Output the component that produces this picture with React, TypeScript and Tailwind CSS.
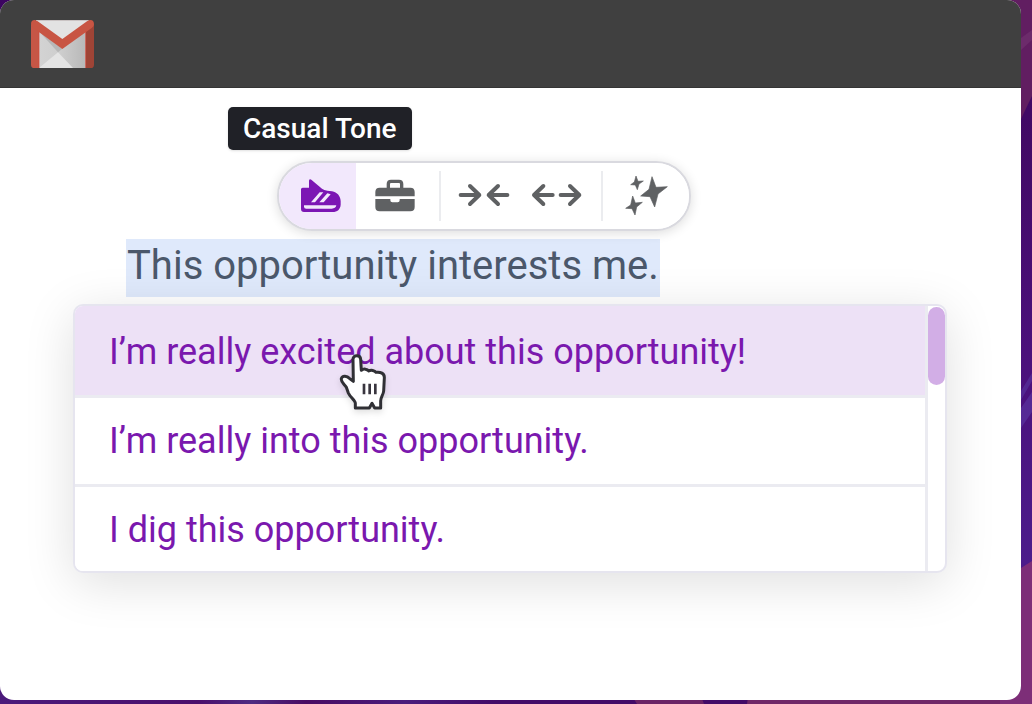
import { useState } from "react";
import type { ReactNode } from "react";

function Backdrop() {
  return (
    <svg
      className="absolute inset-0 h-full w-full"
      viewBox="0 0 1032 704"
      preserveAspectRatio="none"
      aria-hidden="true"
    >
      <defs>
        <linearGradient id="side" x1="0" y1="0" x2="0" y2="1">
          <stop offset="0" stopColor="#3c0561" />
          <stop offset="0.2" stopColor="#420a66" />
          <stop offset="0.5" stopColor="#4b107b" />
          <stop offset="0.8" stopColor="#4b1c8b" />
          <stop offset="1" stopColor="#451069" />
        </linearGradient>
        <linearGradient id="base" x1="0" y1="0" x2="1" y2="0">
          <stop offset="0" stopColor="#4b1a7b" />
          <stop offset="0.22" stopColor="#4b0f6c" />
          <stop offset="0.28" stopColor="#4e2c82" />
          <stop offset="0.34" stopColor="#490b63" />
          <stop offset="0.45" stopColor="#4a1c7c" />
          <stop offset="0.55" stopColor="#430b68" />
          <stop offset="1" stopColor="#430b68" />
        </linearGradient>
      </defs>
      <rect width="1032" height="704" fill="url(#side)" />
      <rect y="670" width="900" height="34" fill="url(#base)" />
      <path d="M1000 0H1032V96L1021 119H1000Z" fill="#611e61" />
      <path d="M1021 38L1032 30V40L1021 50Z" fill="#6c2b6b" />
      <path d="M1021 391L1032 373V381L1021 400Z" fill="#57309b" fillOpacity=".7" />
      <path d="M1021 408L1032 392V412L1021 428Z" fill="#57309b" fillOpacity=".8" />
      <path d="M749 690H1021V704H747Z" fill="#702868" />
      <path d="M1021 568L1032 561V704H1000V690H1021Z" fill="#7d2e78" />
      <path d="M632 696H701L704 704H637Z" fill="#6b2466" />
    </svg>
  );
}

function MailLogo() {
  return (
    <svg width="63" height="48" viewBox="93 60 189 144" role="img" aria-label="Gmail">
      <defs>
        <linearGradient id="paper" x1="0" y1="0" x2="1" y2="0">
          <stop offset="0" stopColor="#d3d3d3" />
          <stop offset=".45" stopColor="#cecece" />
          <stop offset="1" stopColor="#b8b8b8" />
        </linearGradient>
      </defs>
      <rect x="108" y="60" width="158" height="144" fill="#e3e3e3" />
      <path d="M117 94L187 146L257 94V204H117Z" fill="url(#paper)" />
      <path d="M117 94L174 157L187 146Z" fill="#b7b7b7" />
      <path d="M174 157L219 204H117Z" fill="#e4e4e4" />
      <path d="M93 72L117 90V204H103Q93 204 93 194Z" fill="#c65646" />
      <path d="M257 90L282 72V194Q282 204 272 204H257Z" fill="#9f4436" />
      <path
        d="M93 72Q93 60 104 60Q108 60 112 63L187 117L262 63Q266 60 271 60Q282 60 282 73Q282 79 275 84L187 147L101 85Q93 79 93 72Z"
        fill="#c85543"
      />
      <path d="M117 94V204M257 94V204" stroke="#d44638" strokeWidth="2" />
      <path d="M109 61H265" stroke="#b7aaaa" strokeWidth="2" />
    </svg>
  );
}

function ShoeIcon() {
  return (
    <svg width="42" height="35" viewBox="92 80 126 105" aria-hidden="true">
      <path
        d="M95 114Q95 109 100 109H119V88Q120 82 126 85L158 112Q164 117 174 118L188 120C204 123 213 134 214 149V160C213 174 204 182 190 182H104Q95 182 95 173Z"
        fill="#7c16b4"
      />
      <path d="M125 153L151 123H162L137 153ZM150 153L174 126L184 129L163 153Z" fill="#f2e8fc" />
      <path d="M104 162H201Q199 172 187 172H111Q104 172 104 166Z" fill="#f2e8fc" />
    </svg>
  );
}

function BriefcaseIcon() {
  return (
    <svg width="40" height="33" viewBox="314 85 120 99" aria-hidden="true">
      <path
        d="M354 116V100Q354 92 362 92H386Q394 92 394 100V116"
        fill="none"
        stroke="#5f6163"
        strokeWidth="10"
      />
      <path
        d="M328 111H420Q433 111 433 124V137H315V124Q315 111 328 111ZM315 145H360V149Q360 155 366 155H382Q388 155 388 149V145H433V169Q433 182 420 182H328Q315 182 315 169Z"
        fill="#5f6163"
      />
    </svg>
  );
}

function ShortenIcon() {
  return (
    <svg width="52" height="24" viewBox="54 100 156 72" aria-hidden="true">
      <path
        d="M62 136H118M90 109L118 136L90 163M202 136H146M174 109L146 136L174 163"
        fill="none"
        stroke="#5f6163"
        strokeWidth="12"
        strokeLinecap="round"
        strokeLinejoin="round"
      />
    </svg>
  );
}

function LengthenIcon() {
  return (
    <svg width="52" height="24" viewBox="273 100 156 72" aria-hidden="true">
      <path
        d="M338 136H282M310 109L282 136L310 163M362 136H418M390 109L418 136L390 163"
        fill="none"
        stroke="#5f6163"
        strokeWidth="12"
        strokeLinecap="round"
        strokeLinejoin="round"
      />
    </svg>
  );
}

function SparklesIcon() {
  return (
    <svg width="43" height="41" viewBox="554 74 129 123" aria-hidden="true">
      <g fill="#5f6163" stroke="#5f6163" strokeWidth="2" strokeLinejoin="round">
        <path d="M635 79L647 111L681 109L653 131L643 170L629 139L601 137L626 117Z" />
        <path d="M587 77L593 93L609 92L596 101L591 118L585 104L571 103L582 95Z" />
        <path d="M577 137L585 158L606 156L589 170L584 194L575 175L556 174L571 164Z" />
      </g>
    </svg>
  );
}

function HandCursor() {
  return (
    <svg
      className="pointer-events-none absolute top-[46px] left-[263px] drop-shadow-md"
      width="50"
      height="60"
      viewBox="24 20 150 180"
      aria-hidden="true"
    >
      <path
        d="M69 42C69 28 91 27 92 42L94 75C101 69 112 71 116 77C123 73 134 75 138 81C151 79 164 84 163 98L161 137C160 149 151 157 152 168L152 188H134L126 174L118 188H76V174C76 166 60 155 55 143L49 126C44 117 32 110 34 100C37 89 52 92 58 99L70 108Z"
        fill="#fff"
        stroke="#303035"
        strokeWidth="9"
        strokeLinejoin="round"
      />
      <path d="M102 115V147M119 115V147M136 115V147" stroke="#39353f" strokeWidth="8" />
    </svg>
  );
}

type ToolProps = {
  label: string;
  active?: boolean;
  className: string;
  onSelect: () => void;
  children: ReactNode;
};

function Tool({ label, active = false, className, onSelect, children }: ToolProps) {
  return (
    <button
      type="button"
      aria-label={label}
      aria-pressed={active}
      onClick={onSelect}
      className={`flex h-full shrink-0 items-center justify-center pb-0.5 ${
        active ? "bg-[#f2e8fc]" : "bg-white"
      } ${className}`}
    >
      {children}
    </button>
  );
}

const suggestions = [
  { text: "I’m really excited about this opportunity!", size: "h-[89px] pt-0.5" },
  { text: "I’m really into this opportunity.", size: "h-[86px]" },
  { text: "I dig this opportunity.", size: "h-[84px] pt-0.5" },
];

export default function App() {
  const [tone, setTone] = useState("Casual Tone");

  return (
    <div className="relative flex min-h-screen flex-col pr-[11px] pb-1 font-[Roboto,sans-serif]">
      <Backdrop />
      <div className="relative flex flex-1 flex-col overflow-hidden rounded-[14px] bg-white">
        <header className="flex h-[88px] items-center border-b border-[#353535] bg-[#404040] px-[31px]">
          <MailLogo />
        </header>

        <main className="flex flex-col items-start pt-[19px] pb-12">
          <div
            role="tooltip"
            className="ml-[228px] flex h-[43px] items-center rounded-[5px] bg-[#202127] px-[15px] text-[28px] leading-8 font-medium text-white shadow-sm"
          >
            Casual Tone
          </div>

          <div
            role="toolbar"
            aria-label="Rewrite"
            className="relative z-10 mt-[11px] ml-[277px] flex h-[70px] items-center overflow-hidden rounded-full border-2 border-[#d9d9df] bg-white shadow-[0_2px_12px_rgba(0,0,0,0.14)]"
          >
            <Tool
              label="Casual Tone"
              active={tone === "Casual Tone"}
              className="w-[77px] pl-1.5"
              onSelect={() => setTone("Casual Tone")}
            >
              <ShoeIcon />
            </Tool>
            <Tool
              label="Formal Tone"
              active={tone === "Formal Tone"}
              className="w-[77px]"
              onSelect={() => setTone("Formal Tone")}
            >
              <BriefcaseIcon />
            </Tool>
            <span className="ml-1.5 h-[50px] w-0.5 bg-[#ebecef]" />
            <Tool
              label="Shorten"
              active={tone === "Shorten"}
              className="w-[84px] pl-0.5"
              onSelect={() => setTone("Shorten")}
            >
              <ShortenIcon />
            </Tool>
            <Tool
              label="Expand"
              active={tone === "Expand"}
              className="w-[76px] pr-3"
              onSelect={() => setTone("Expand")}
            >
              <LengthenIcon />
            </Tool>
            <span className="h-[50px] w-0.5 bg-[#ebecef]" />
            <Tool
              label="Rewrite"
              active={tone === "Rewrite"}
              className="w-[86px]"
              onSelect={() => setTone("Rewrite")}
            >
              <SparklesIcon />
            </Tool>
          </div>

          <p className="mt-2 ml-[126px] h-[58px] bg-[#dfe9fb] px-px text-[40px] leading-[54px] text-[#4b586b]">
            This opportunity interests me.
          </p>

          <div className="relative mt-[7px] flex self-stretch pr-[74px] pl-[73px]">
            <div className="flex flex-1 rounded-[10px] border-2 border-[#e6e5ef] bg-white shadow-[0_10px_50px_rgba(0,0,0,0.13)]">
              <ul className="flex-1 divide-y-[3px] divide-[#ebebf1] overflow-hidden rounded-l-lg border-r-[3px] border-[#ebebf1]">
                {suggestions.map(({ text, size }, i) => (
                  <li key={text} className={i === 0 ? "relative bg-[#ede1f6]" : "bg-white"}>
                    <button
                      type="button"
                      className={`flex w-full items-center px-[34px] text-left text-[36px] leading-10 text-[#7a18ae] ${size}`}
                    >
                      {text}
                    </button>
                    {i === 0 && <HandCursor />}
                  </li>
                ))}
              </ul>
              <div className="w-[17px] pt-px">
                <div className="h-[78px] rounded-full bg-[#d2aee6]" />
              </div>
            </div>
          </div>
        </main>
      </div>
    </div>
  );
}
